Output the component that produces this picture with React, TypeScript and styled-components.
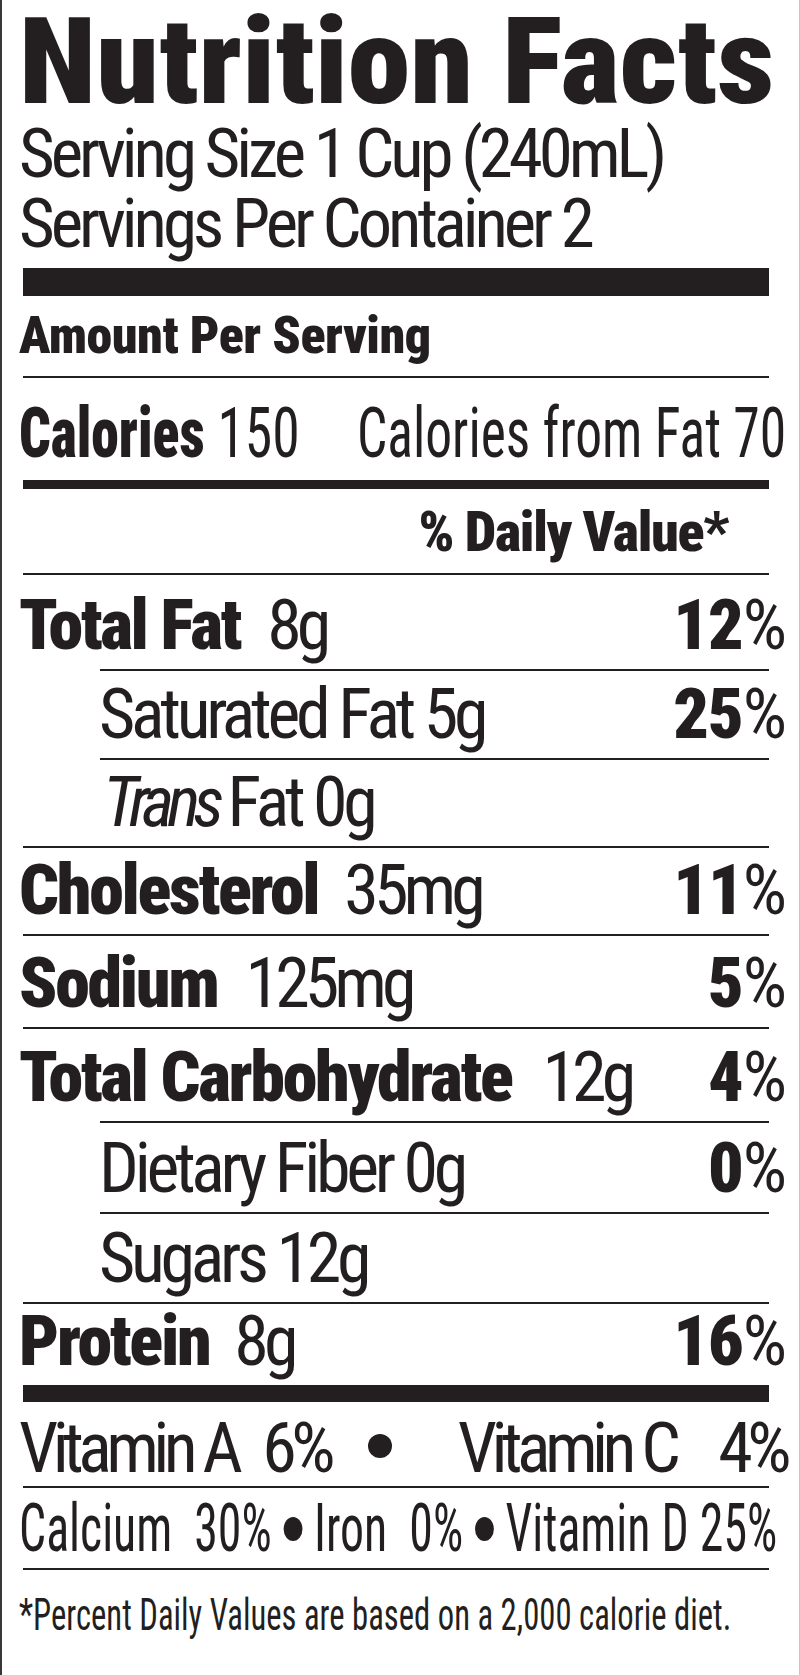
import React from "react";
import styled, { createGlobalStyle } from "styled-components";

const ink = "#231f20";

const GlobalStyle = createGlobalStyle`
  html, body { margin: 0; padding: 0; background: #ffffff; }
  body { font-family: Roboto, "Liberation Sans", sans-serif; }
`;

const Label = styled.div`
  width: 800px;
  height: 1675px;
  box-sizing: border-box;
  border-left: 2px solid #3a3637;
  border-right: 1px solid #c6c6c6;
  padding: 0 13px 0 17px;
  color: ${ink};
  font-family: Roboto, "Liberation Sans", sans-serif;
  font-stretch: 75%;
  overflow: hidden;
  white-space: nowrap;
`;

const Title = styled.h1`
  margin: 0;
  padding-top: 5px;
  height: 119px;
  box-sizing: border-box;
  font-size: 120px;
  line-height: 114px;
  font-weight: 900;
`;

const ServingLine = styled.div`
  font-size: 69px;
  line-height: 70px;
  font-weight: 400;
  letter-spacing: -4.1px;
`;

const Bar = styled.div<{ $h: number; $mt?: number }>`
  height: ${(p) => p.$h}px;
  margin: ${(p) => p.$mt ?? 0}px 17px 0 4px;
  background: ${ink};
`;

const Rule = styled.div<{ $indent?: boolean }>`
  height: 2px;
  margin: 0 17px 0 ${(p) => (p.$indent ? 81 : 4)}px;
  background: ${ink};
`;

const AmountHeader = styled.div`
  font-size: 52px;
  line-height: 80px;
  font-weight: 900;
  letter-spacing: -0.5px;
`;

const CaloriesRow = styled.div`
  display: flex;
  justify-content: space-between;
  height: 102px;
  box-sizing: border-box;
  padding-top: 9px;
  font-size: 70px;
  line-height: 93px;
`;

const Squeeze = styled.span<{ $scale: number; $origin: "left" | "right" }>`
  display: inline-block;
  flex-shrink: ${(p) => (p.$origin === "left" ? 1 : 0)};
  min-width: 0;
  transform: scaleX(${(p) => p.$scale});
  transform-origin: ${(p) => p.$origin} center;
`;

const Bold = styled.span`
  font-weight: 900;
`;

const Regular = styled.span`
  font-weight: 400;
`;

const DailyHeader = styled.div`
  height: 84px;
  box-sizing: border-box;
  padding: 2px 58px 0 0;
  text-align: right;
  font-size: 56px;
  line-height: 82px;
  font-weight: 900;
  letter-spacing: -1.3px;
`;

const NutrientRow = styled.div<{ $h: number; $indent?: boolean }>`
  display: flex;
  align-items: flex-end;
  justify-content: space-between;
  height: ${(p) => p.$h}px;
  box-sizing: border-box;
  padding-bottom: 9px;
  padding-left: ${(p) => (p.$indent ? 80 : 0)}px;
  font-size: 70px;
  line-height: 70px;
`;

const NameGroup = styled.div`
  display: flex;
  align-items: flex-end;
`;

const Name = styled.span<{ $bold: boolean }>`
  font-weight: ${(p) => (p.$bold ? 900 : 400)};
  letter-spacing: ${(p) => (p.$bold ? -2.3 : -4.3)}px;
`;

const Amount = styled.span<{ $gap: number }>`
  margin-left: ${(p) => p.$gap}px;
  font-weight: 400;
  letter-spacing: -5px;
`;

const Italic = styled.span`
  font-style: italic;
  font-weight: 400;
  margin-left: 4px;
  margin-right: 10px;
  letter-spacing: -6.8px;
`;

const Percent = styled.span`
  font-weight: 400;
  letter-spacing: -1px;
`;

const VitaminRow = styled.div`
  display: flex;
  align-items: flex-end;
  justify-content: space-between;
  height: 84px;
  box-sizing: border-box;
  padding-bottom: 3px;
  font-size: 70px;
  line-height: 70px;
  letter-spacing: -5.6px;
`;

const Group = styled.div`
  display: flex;
  align-items: flex-end;
`;

const Piece = styled.span<{ $gap?: number }>`
  margin-left: ${(p) => p.$gap ?? 0}px;
`;

const Dot = styled.span<{ $w: number; $h: number; $lift: number; $gap?: number }>`
  display: inline-block;
  width: ${(p) => p.$w}px;
  height: ${(p) => p.$h}px;
  margin: 0 1px ${(p) => p.$lift}px ${(p) => p.$gap ?? 1}px;
  border-radius: 50%;
  background: ${ink};
  vertical-align: baseline;
`;

const MineralRow = styled.div`
  height: 80px;
  box-sizing: border-box;
  padding-top: 8px;
  font-size: 66px;
  line-height: 66px;
`;

const Footnote = styled.div`
  font-size: 45px;
  line-height: 89px;
`;

type Nutrient = {
  name: string;
  bold: boolean;
  amount?: string;
  gap?: number;
  pct?: string;
  h: number;
  indent?: boolean;
  italic?: string;
  ruleBefore: "full" | "indent";
};

const nutrients: Nutrient[] = [
  { name: "Total Fat", bold: true, amount: "8g", gap: 27, pct: "12", h: 94, ruleBefore: "full" },
  { name: "Saturated Fat 5g", bold: false, pct: "25", h: 87, indent: true, ruleBefore: "indent" },
  { name: "Fat 0g", italic: "Trans", bold: false, h: 86, indent: true, ruleBefore: "indent" },
  { name: "Cholesterol", bold: true, amount: "35mg", gap: 26, pct: "11", h: 86, ruleBefore: "full" },
  { name: "Sodium", bold: true, amount: "125mg", gap: 28, pct: "5", h: 91, ruleBefore: "full" },
  { name: "Total Carbohydrate", bold: true, amount: "12g", gap: 31, pct: "4", h: 92, ruleBefore: "full" },
  { name: "Dietary Fiber 0g", bold: false, pct: "0", h: 89, indent: true, ruleBefore: "indent" },
  { name: "Sugars 12g", bold: false, h: 88, indent: true, ruleBefore: "indent" },
  { name: "Protein", bold: true, amount: "8g", gap: 25, pct: "16", h: 81, ruleBefore: "full" },
];

export default function App() {
  return (
    <>
      <GlobalStyle />
      <Label>
        <Title>
          <Squeeze $scale={1.055} $origin="left">Nutrition Facts</Squeeze>
        </Title>
        <ServingLine>Serving Size 1 Cup (240mL)</ServingLine>
        <ServingLine>Servings Per Container 2</ServingLine>
        <Bar $h={28} $mt={9} />
        <AmountHeader>Amount Per Serving</AmountHeader>
        <Rule />
        <CaloriesRow>
          <Squeeze $scale={0.795} $origin="left">
            <Bold>Calories</Bold> <Regular>150</Regular>
          </Squeeze>
          <Squeeze $scale={0.765} $origin="right">
            <Regular>Calories from Fat 70</Regular>
          </Squeeze>
        </CaloriesRow>
        <Bar $h={9} />
        <DailyHeader>% Daily Value*</DailyHeader>
        {nutrients.map((n) => (
          <React.Fragment key={n.name}>
            <Rule $indent={n.ruleBefore === "indent"} />
            <NutrientRow $h={n.h} $indent={n.indent}>
              <NameGroup>
                {n.italic && <Italic>{n.italic}</Italic>}
                <Name $bold={n.bold}>{n.name}</Name>
                {n.amount && <Amount $gap={n.gap ?? 0}>{n.amount}</Amount>}
              </NameGroup>
              {n.pct && (
                <Percent>
                  <Bold>{n.pct}</Bold>%
                </Percent>
              )}
            </NutrientRow>
          </React.Fragment>
        ))}
        <Bar $h={17} />
        <VitaminRow>
          <Group>
            <Piece>Vitamin A</Piece>
            <Piece $gap={25}>6%</Piece>
            <Dot $w={24} $h={24} $lift={25} $gap={38} />
          </Group>
          <Group>
            <Piece>Vitamin C</Piece>
            <Piece $gap={43}>4%</Piece>
          </Group>
        </VitaminRow>
        <Rule />
        <MineralRow>
          <Squeeze $scale={0.725} $origin="left">
            Calcium&nbsp; 30% <Dot $w={26} $h={24} $lift={10} /> Iron&nbsp; 0%{" "}
            <Dot $w={26} $h={24} $lift={10} /> Vitamin D 25%
          </Squeeze>
        </MineralRow>
        <Rule />
        <Footnote>
          <Squeeze $scale={0.726} $origin="left">
            *Percent Daily Values are based on a 2,000 calorie diet.
          </Squeeze>
        </Footnote>
      </Label>
    </>
  );
}
